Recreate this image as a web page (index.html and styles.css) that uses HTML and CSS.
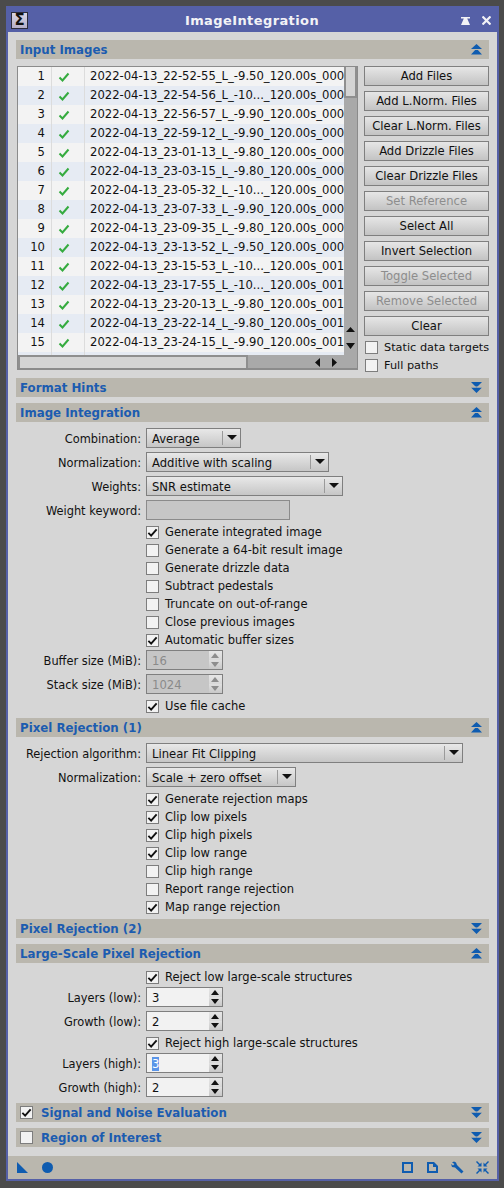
FILE: index.html
```html
<!DOCTYPE html>
<html lang="en">
<head>
    <meta charset="UTF-8">
    <title>ImageIntegration</title>
    <link rel="stylesheet" href="styles.css">
</head>
<body>
    <svg class="defs" width="0" height="0">
        <symbol id="up" viewBox="0 0 11 11"><path d="M5.500 0 11 5H0zM5.500 4.500 11 10.500H0z"/><path d="M0 5h11v1H0z" fill="#bab7ae"/></symbol>
        <symbol id="down" viewBox="0 0 11 11"><path d="M0 0h11L5.500 5.500zM0 5.500h11L5.500 11z"/><path d="M0 4.500h11v1H0z" fill="#bab7ae"/></symbol>
        <symbol id="tick" viewBox="0 0 12 12"><path d="M1.500 6.500 4.500 9.500 10.500 2.500" fill="none" stroke="currentColor" stroke-width="2"/></symbol>
    </svg>

    <div class="window">
        <header class="titlebar">
            <span class="sigma">Σ</span>
            <span class="title">ImageIntegration</span>
            <svg class="title-pin" width="9" height="8" viewBox="0 0 9 8"><path d="M0 0h9v1.500H6.200L9 8H0l2.800-6.500H0z" fill="#f2f2f6"/></svg>
            <svg class="title-close" width="9" height="9" viewBox="0 0 9 9"><path d="M.5.500l8 8M8.500.500l-8 8" stroke="#f2f2f6" stroke-width="2.200"/></svg>
        </header>

        <main class="content">
            <div class="section-head"><span>Input Images</span><svg class="chev"><use href="#up"/></svg></div>
            <div class="input-images">
                <div class="listbox">
                    <div class="rows">
                        <div class="row"><span class="num">1</span><span class="state"><svg class="ok"><use href="#tick"/></svg></span><span class="name">2022-04-13_22-52-55_L_-9.50_120.00s_000</span></div>
                        <div class="row"><span class="num">2</span><span class="state"><svg class="ok"><use href="#tick"/></svg></span><span class="name">2022-04-13_22-54-56_L_-10..._120.00s_000</span></div>
                        <div class="row"><span class="num">3</span><span class="state"><svg class="ok"><use href="#tick"/></svg></span><span class="name">2022-04-13_22-56-57_L_-9.90_120.00s_000</span></div>
                        <div class="row"><span class="num">4</span><span class="state"><svg class="ok"><use href="#tick"/></svg></span><span class="name">2022-04-13_22-59-12_L_-9.90_120.00s_000</span></div>
                        <div class="row"><span class="num">5</span><span class="state"><svg class="ok"><use href="#tick"/></svg></span><span class="name">2022-04-13_23-01-13_L_-9.80_120.00s_000</span></div>
                        <div class="row"><span class="num">6</span><span class="state"><svg class="ok"><use href="#tick"/></svg></span><span class="name">2022-04-13_23-03-15_L_-9.80_120.00s_000</span></div>
                        <div class="row"><span class="num">7</span><span class="state"><svg class="ok"><use href="#tick"/></svg></span><span class="name">2022-04-13_23-05-32_L_-10..._120.00s_000</span></div>
                        <div class="row"><span class="num">8</span><span class="state"><svg class="ok"><use href="#tick"/></svg></span><span class="name">2022-04-13_23-07-33_L_-9.90_120.00s_000</span></div>
                        <div class="row"><span class="num">9</span><span class="state"><svg class="ok"><use href="#tick"/></svg></span><span class="name">2022-04-13_23-09-35_L_-9.80_120.00s_000</span></div>
                        <div class="row"><span class="num">10</span><span class="state"><svg class="ok"><use href="#tick"/></svg></span><span class="name">2022-04-13_23-13-52_L_-9.50_120.00s_000</span></div>
                        <div class="row"><span class="num">11</span><span class="state"><svg class="ok"><use href="#tick"/></svg></span><span class="name">2022-04-13_23-15-53_L_-10..._120.00s_001</span></div>
                        <div class="row"><span class="num">12</span><span class="state"><svg class="ok"><use href="#tick"/></svg></span><span class="name">2022-04-13_23-17-55_L_-10..._120.00s_001</span></div>
                        <div class="row"><span class="num">13</span><span class="state"><svg class="ok"><use href="#tick"/></svg></span><span class="name">2022-04-13_23-20-13_L_-9.80_120.00s_001</span></div>
                        <div class="row"><span class="num">14</span><span class="state"><svg class="ok"><use href="#tick"/></svg></span><span class="name">2022-04-13_23-22-14_L_-9.80_120.00s_001</span></div>
                        <div class="row"><span class="num">15</span><span class="state"><svg class="ok"><use href="#tick"/></svg></span><span class="name">2022-04-13_23-24-15_L_-9.90_120.00s_001</span></div>
                        <div class="row"><span class="num"></span><span class="state"></span><span class="name"></span></div>
                    </div>
                    <div class="vbar">
                        <div class="vthumb"></div>
                        <svg class="vbar-arrows" width="9" height="22" viewBox="0 0 9 22"><path d="M4.500 0 9 5H0zM0 16h9l-4.500 6z" fill="#111"/></svg>
                    </div>
                    <div class="hbar">
                        <div class="hthumb"></div>
                        <svg class="hbar-arrows" width="22" height="9" viewBox="0 0 22 9"><path d="M5 0v9L0 4.500zM17 0l5 4.500L17 9z" fill="#111"/></svg>
                    </div>
                    <div class="corner"></div>
                </div>
                <div class="side">
                    <button class="btn">Add Files</button>
                    <button class="btn">Add L.Norm. Files</button>
                    <button class="btn">Clear L.Norm. Files</button>
                    <button class="btn">Add Drizzle Files</button>
                    <button class="btn">Clear Drizzle Files</button>
                    <button class="btn off">Set Reference</button>
                    <button class="btn">Select All</button>
                    <button class="btn">Invert Selection</button>
                    <button class="btn off">Toggle Selected</button>
                    <button class="btn off">Remove Selected</button>
                    <button class="btn">Clear</button>
                    <label class="side-check"><span class="box"></span>Static data targets</label>
                    <label class="side-check"><span class="box"></span>Full paths</label>
                </div>
            </div>

            <div class="section-head gap-format"><span>Format Hints</span><svg class="chev"><use href="#down"/></svg></div>

            <div class="section-head gap-small"><span>Image Integration</span><svg class="chev"><use href="#up"/></svg></div>
            <div class="form">
                <div class="field"><label>Combination:</label><div class="combo w-average"><span>Average</span><i></i></div></div>
                <div class="field"><label>Normalization:</label><div class="combo w-additive"><span>Additive with scaling</span><i></i></div></div>
                <div class="field"><label>Weights:</label><div class="combo w-weights"><span>SNR estimate</span><i></i></div></div>
                <div class="field"><label>Weight keyword:</label><div class="textbox off w-keyword"></div></div>
                <div class="checks">
                    <div class="check"><span class="box on"><svg><use href="#tick"/></svg></span>Generate integrated image</div>
                    <div class="check"><span class="box"></span>Generate a 64-bit result image</div>
                    <div class="check"><span class="box"></span>Generate drizzle data</div>
                    <div class="check"><span class="box"></span>Subtract pedestals</div>
                    <div class="check"><span class="box"></span>Truncate on out-of-range</div>
                    <div class="check"><span class="box"></span>Close previous images</div>
                    <div class="check"><span class="box on"><svg><use href="#tick"/></svg></span>Automatic buffer sizes</div>
                </div>
                <div class="field"><label>Buffer size (MiB):</label><div class="spin off"><span>16</span><i></i></div></div>
                <div class="field"><label>Stack size (MiB):</label><div class="spin off"><span>1024</span><i></i></div></div>
                <div class="check"><span class="box on"><svg><use href="#tick"/></svg></span>Use file cache</div>
            </div>

            <div class="section-head gap-small"><span>Pixel Rejection (1)</span><svg class="chev"><use href="#up"/></svg></div>
            <div class="form">
                <div class="field"><label>Rejection algorithm:</label><div class="combo w-algorithm"><span>Linear Fit Clipping</span><i></i></div></div>
                <div class="field"><label>Normalization:</label><div class="combo w-scale"><span>Scale + zero offset</span><i></i></div></div>
                <div class="checks">
                    <div class="check"><span class="box on"><svg><use href="#tick"/></svg></span>Generate rejection maps</div>
                    <div class="check"><span class="box on"><svg><use href="#tick"/></svg></span>Clip low pixels</div>
                    <div class="check"><span class="box on"><svg><use href="#tick"/></svg></span>Clip high pixels</div>
                    <div class="check"><span class="box on"><svg><use href="#tick"/></svg></span>Clip low range</div>
                    <div class="check"><span class="box"></span>Clip high range</div>
                    <div class="check"><span class="box"></span>Report range rejection</div>
                    <div class="check"><span class="box on"><svg><use href="#tick"/></svg></span>Map range rejection</div>
                </div>
            </div>

            <div class="section-head gap-small"><span>Pixel Rejection (2)</span><svg class="chev"><use href="#down"/></svg></div>

            <div class="section-head gap-small"><span>Large-Scale Pixel Rejection</span><svg class="chev"><use href="#up"/></svg></div>
            <div class="form form-large">
                <div class="check"><span class="box on"><svg><use href="#tick"/></svg></span>Reject low large-scale structures</div>
                <div class="field"><label>Layers (low):</label><div class="spin"><span>3</span><i></i></div></div>
                <div class="field"><label>Growth (low):</label><div class="spin"><span>2</span><i></i></div></div>
                <div class="check"><span class="box on"><svg><use href="#tick"/></svg></span>Reject high large-scale structures</div>
                <div class="field"><label>Layers (high):</label><div class="spin"><span><b class="sel">3</b></span><i></i></div></div>
                <div class="field"><label>Growth (high):</label><div class="spin"><span>2</span><i></i></div></div>
            </div>

            <div class="section-head gap-small"><span class="head-check"><span class="box on"><svg><use href="#tick"/></svg></span>Signal and Noise Evaluation</span><svg class="chev"><use href="#down"/></svg></div>
            <div class="section-head gap-small"><span class="head-check"><span class="box"></span>Region of Interest</span><svg class="chev"><use href="#down"/></svg></div>
        </main>

        <footer class="toolbar">
            <svg width="11" height="11" viewBox="0 0 11 11"><path d="M0 0l11 11H0z"/></svg>
            <svg width="11" height="11" viewBox="0 0 11 11"><circle cx="5.500" cy="5.500" r="5.500"/></svg>
            <span class="spacer"></span>
            <svg width="11" height="11" viewBox="0 0 11 11"><path d="M0 0h11v11H0zM2 2v7h7V2z" fill-rule="evenodd"/></svg>
            <svg width="11" height="11" viewBox="0 0 11 11"><path d="M0 0h7l4 4v7H0zM2 2v7h7V5H6V2z" fill-rule="evenodd"/></svg>
            <svg class="tool-wrench" width="13" height="13" viewBox="0 0 13 13"><path d="M1 1.500 3 .5 5 1.500 6 4l6.500 6.500-2 2L4 6.500 1 6 0 3l2 1.500L3.500 3z"/></svg>
            <svg class="tool-shrink" width="13" height="13" viewBox="0 0 13 13"><path d="M0 1l1-1 3 3 1.500-1.500V5.500H1.500L3 4zM13 1l-1-1-3 3-1.500-1.500V5.500h4L10 4zM0 12l1 1 3-3 1.500 1.500v-4h-4L3 9zM13 12l-1 1-3-3-1.500 1.500v-4h4L10 9z"/></svg>
        </footer>
    </div>
</body>
</html>
```

FILE: styles.css
```css
html, body{
    margin: 0;
    height: 100%;
}
body{
    background-color: #4b4b4b;
    font-family: "DejaVu Sans", sans-serif;
    font-size: 11.6px;
    color: #111;
    padding: 6px 5px 0 6px;
    box-sizing: border-box;
    overflow: hidden;
}
.defs{
    display: block;
    height: 0;
}

.window{
    width: 493px;
    height: 1175px;
    box-sizing: border-box;
    border: 2px solid #5560a7;
    border-top: 0;
    background-color: #d6d6d6;
    display: flex;
    flex-direction: column;
}

.titlebar{
    height: 26px;
    box-sizing: border-box;
    flex: none;
    background-color: #5560a7;
    display: flex;
    align-items: center;
    padding: 3px 6px 0 3px;
    color: #f2f2f6;
}
.sigma{
    width: 17px;
    height: 17px;
    flex: none;
    box-sizing: border-box;
    border: 1px solid #2c2c3a;
    background: linear-gradient(#d9d5e4, #b6b0c8);
    color: #111;
    font-size: 15px;
    font-weight: bold;
    line-height: 15px;
    text-align: center;
}
.title{
    flex: 1;
    text-align: center;
    font-size: 13px;
    font-weight: bold;
    letter-spacing: 0.4px;
    margin-left: 15px;
}
.title-pin{
    flex: none;
}
.title-close{
    flex: none;
    margin-left: 12px;
}

.content{
    flex: 1;
    padding: 8px 8px 0;
}

.section-head{
    height: 19px;
    background-color: #bab7ae;
    display: flex;
    align-items: center;
    justify-content: space-between;
    padding: 0 7px 0 4px;
    color: #1c5cb0;
    font-weight: bold;
    font-size: 11.800px;
}
.chev{
    width: 11px;
    height: 11px;
    fill: #0f5cb0;
    flex: none;
}
.gap-format{
    margin-top: 8px;
}
.gap-small{
    margin-top: 6px;
}
.head-check{
    display: flex;
    align-items: center;
    .box{
        margin-right: 8px;
    }
}

.input-images{
    display: flex;
    margin-top: 7px;
    padding-left: 1px;
    gap: 6px;
}

.listbox{
    width: 342px;
    height: 304px;
    box-sizing: border-box;
    border: 2px solid #8b8b8b;
    border-width: 1px 1px 2px 1px;
    background-color: #a9a9a9;
    display: grid;
    grid-template-columns: 326px 1fr;
    grid-template-rows: 288px 1fr;
}
.rows{
    overflow: hidden;
    background-color: #f3f3f3;
}
.row{
    height: 19px;
    display: flex;
    background-color: #f3f3f3;
    line-height: 19px;
    white-space: nowrap;

    &:nth-child(even){
        background-color: #e6ebf3;
    }
    .num{
        width: 34px;
        flex: none;
        box-sizing: border-box;
        padding-right: 6px;
        text-align: right;
        border-right: 1px solid #dcdcdc;
    }
    .state{
        width: 33px;
        flex: none;
        box-sizing: border-box;
        padding-left: 6px;
        border-right: 1px solid #dcdcdc;
        display: flex;
        align-items: center;
    }
    .name{
        padding-left: 5px;
    }
}
.ok{
    width: 12px;
    height: 12px;
    color: #35ab3f;
}
.vbar{
    position: relative;
    background-color: #a9a9a9;
}
.vthumb{
    height: 31px;
    background-color: #d4d4d4;
    border: 2px solid #8f8f8f;
    border-top-width: 0;
    box-sizing: border-box;
}
.vbar-arrows{
    position: absolute;
    right: 2px;
    bottom: 6px;
}
.hbar{
    position: relative;
    background-color: #a9a9a9;
}
.hthumb{
    width: 230px;
    height: 13px;
    background-color: #d4d4d4;
    border: 2px solid #8f8f8f;
    border-bottom-width: 0;
    box-sizing: border-box;
}
.hbar-arrows{
    position: absolute;
    right: 7px;
    top: 3px;
}
.corner{
    background-color: #a9a9a9;
}

.side{
    width: 125px;
    height: 304px;
    display: flex;
    flex-direction: column;
}
.btn{
    height: 20px;
    flex: none;
    margin-bottom: 5px;
    padding: 0;
    border: 1px solid #7f7f7f;
    background: linear-gradient(#e6e6e6, #c3c3c3);
    font: inherit;
    color: #111;

    &.off{
        color: #8d8d8d;
    }
}
.btn + .side-check{
    margin-top: -3px;
}
.side-check{
    display: flex;
    align-items: center;
    height: 18px;
    flex: none;
    white-space: nowrap;
    font-size: 11.300px;
    .box{
        margin: 0 6px 0 1px;
    }
}

.box{
    width: 13px;
    height: 13px;
    flex: none;
    box-sizing: border-box;
    border: 1px solid #7d7d7d;
    background-color: #f2f2f2;
    display: inline-flex;
    align-items: center;
    justify-content: center;

    svg{
        width: 11px;
        height: 11px;
        color: #111;
    }
}

.form{
    padding-top: 6px;
    margin-bottom: -3px;
}
.form-large{
    margin-bottom: 0;
    > .check:first-child{
        margin-top: -1px;
    }
}
.field{
    display: flex;
    align-items: center;
    height: 20px;
    margin-bottom: 4px;

    label{
        width: 130px;
        flex: none;
        text-align: right;
        padding: 1px 5px 0 0;
        box-sizing: border-box;
        font-size: 11.400px;
    }
}
.field + .checks, .field + .check{
    margin-top: -1px;
}
.checks + .field, .check + .field{
    margin-top: 1px;
}
.combo{
    height: 20px;
    box-sizing: border-box;
    border: 1px solid #7f7f7f;
    background: linear-gradient(#e8e8e8, #c6c6c6);
    display: flex;
    align-items: center;
    padding-left: 5px;

    span{
        flex: 1;
        padding-top: 1px;
    }
    i{
        width: 17px;
        height: 14px;
        flex: none;
        border-left: 1px solid #9a9a9a;
        position: relative;
    }
    i::after{
        content: "";
        position: absolute;
        left: 4px;
        top: 4px;
        border: 5px solid transparent;
        border-top: 5px solid #111;
        border-bottom: 0;
    }
}
.w-average{ width: 95px; }
.w-additive{ width: 183px; }
.w-weights{ width: 197px; }
.w-keyword{ width: 144px; }
.w-algorithm{ width: 317px; }
.w-scale{ width: 150px; }

.textbox{
    height: 20px;
    box-sizing: border-box;
    border: 1px solid #8b8b8b;
    &.off{
        background-color: #c6c6c6;
    }
}

.spin{
    width: 77px;
    height: 20px;
    box-sizing: border-box;
    border: 1px solid #7f7f7f;
    background-color: #f2f2f2;
    display: flex;
    align-items: center;
    padding-left: 5px;

    span{
        flex: 1;
        padding-top: 1px;
    }
    i{
        width: 13px;
        height: 18px;
        flex: none;
        background: linear-gradient(#e6e6e6, #d8d8d8 50%, #e0e0e0 50%, #c8c8c8);
        position: relative;
    }
    i::before, i::after{
        content: "";
        position: absolute;
        left: 2px;
        border: 4px solid transparent;
    }
    i::before{
        top: 2px;
        border-top: 0;
        border-bottom: 5px solid #111;
    }
    i::after{
        bottom: 2px;
        border-bottom: 0;
        border-top: 5px solid #111;
    }
    &.off{
        background-color: #c6c6c6;
        color: #8a8a8a;
        i::before{ border-bottom-color: #8d8d8d; }
        i::after{ border-top-color: #8d8d8d; }
    }
}
.sel{
    font-weight: normal;
    background-color: #5b95e8;
    color: #fff;
}

.check{
    height: 18px;
    padding-left: 130px;
    display: flex;
    align-items: center;
    font-size: 11.500px;

    .box{
        margin-right: 6px;
    }
}

.toolbar{
    height: 23px;
    flex: none;
    background-color: #bab7ae;
    display: flex;
    align-items: center;
    gap: 14px;
    padding: 0 8px 0 9px;
    fill: #0f5cb0;
}
.spacer{
    flex: 1;
}
.tool-wrench{
    margin-left: -1px;
}
.tool-shrink{
    margin-left: -2px;
}
```
